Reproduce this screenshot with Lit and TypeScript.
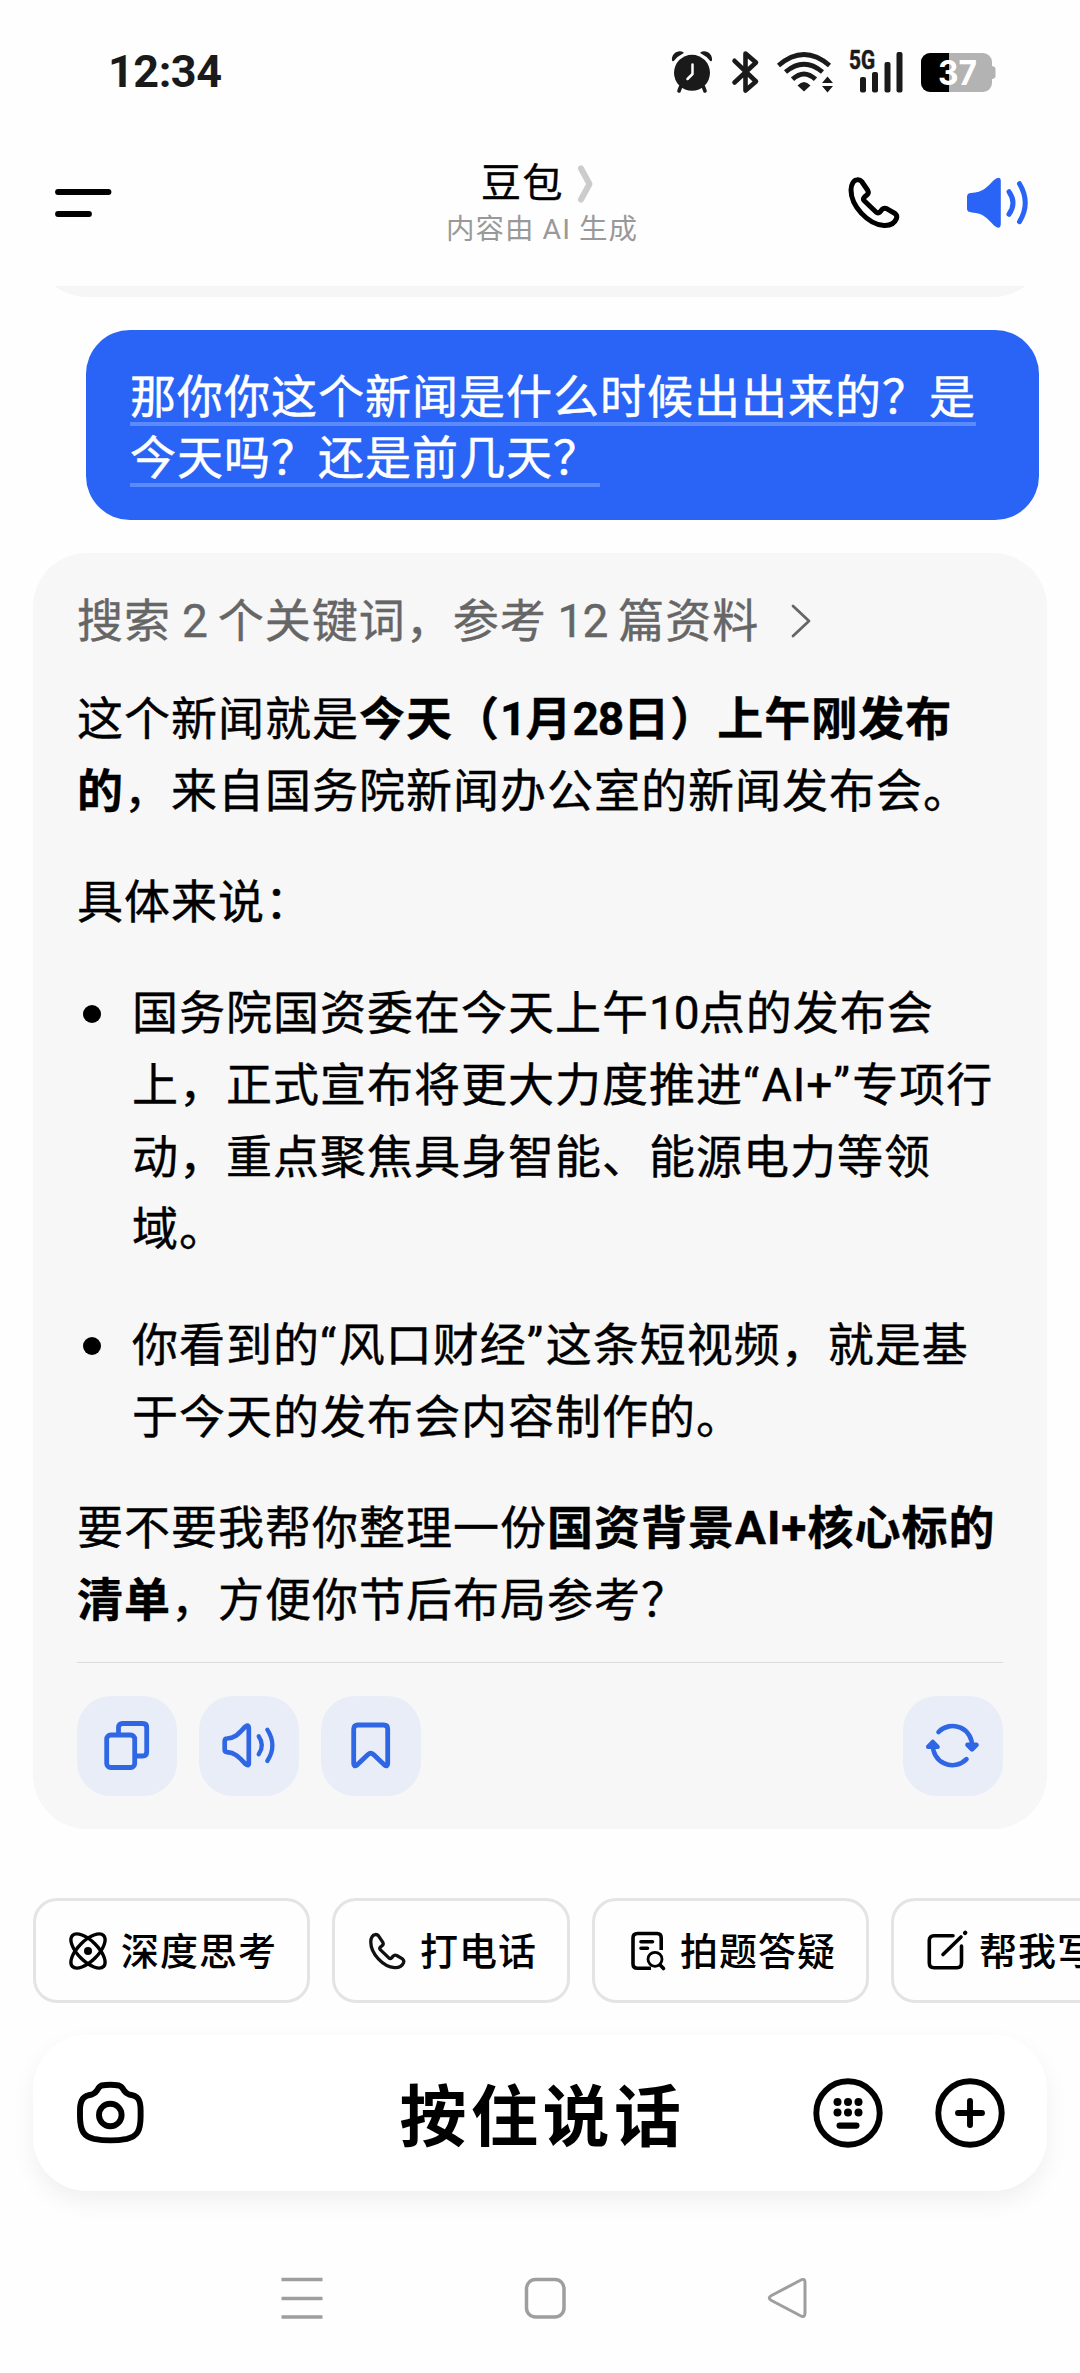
import { LitElement, html, css, svg, TemplateResult } from "lit";
import { customElement } from "lit/decorators.js";

const icon = (w: number, h: number, body: TemplateResult, box = `0 0 ${w} ${h}`) => html`
  <svg width=${w} height=${h} viewBox=${box} fill="none" stroke-linecap="round" stroke-linejoin="round">${body}</svg>
`;

const phonePath =
  "M4 14C4 8 7 4 10 3.7Q13 3.3 14.7 5.5L20.8 14.5Q22 17 20 18.8L17.5 21Q15.5 23 17.5 25L29 36Q31 38 33 36L35 33.5Q37 31.3 40 32.8L48 37.5Q50.5 39.5 49.5 42.5C47.5 47.5 43 49.8 37 49.5C21 48.5 4 30 4 14Z";

const icons = {
  alarm: icon(43, 44, svg`
    <g fill="#1a1a1a">
      <circle cx="21" cy="22.8" r="18" />
      <path d="M1 10.5C0 4 7 -1 12.5 2.2Q13 2.8 12 3.5Q6 6.500 3 10.800Q1.800 12 1 10.500Z" />
      <path d="M41 10.500C42 4 35 -1 29.500 2.200Q29 2.800 30 3.500Q36 6.500 39 10.800Q40.200 12 41 10.500Z" />
    </g>
    <path d="M9.500 37L8 41M32.500 37L34 41" stroke="#1a1a1a" stroke-width="3.600" />
    <path d="M21.500 14.500V24L16.500 29" stroke="#fff" stroke-width="2.500" />`),
  bluetooth: icon(28, 44, svg`
    <path d="M3.500 10.800L25 31.500L14.500 40.500V3.500L25 12.500L3.500 32.500" stroke="#1a1a1a" stroke-width="4.600" />`),
  wifi: icon(58, 44, svg`
    <g stroke="#1a1a1a" stroke-width="4.800" stroke-linecap="butt">
      <path d="M2.500 15.500Q28 -6.500 53.500 15.500" />
      <path d="M9.500 22Q28 6.500 46.500 22" />
      <path d="M16.500 29.300Q28 18.500 39.500 29.300" />
    </g>
    <path d="M21.500 35.500Q28 28.500 34.500 35.500L28 41.500Z M46 33L51.500 26.500L57 33Z M46 36H57L51.500 42.500Z" fill="#1a1a1a" />`),
  signal: icon(56, 44, svg`
    <text class="net" x="1" y="19" textLength="26" lengthAdjust="spacingAndGlyphs">5G</text>
    <g fill="#1a1a1a">
      <rect x="12" y="27" width="6" height="15.500" rx="2" />
      <rect x="24" y="22" width="6" height="20.500" rx="2" />
      <rect x="36.500" y="12" width="6" height="30.500" rx="2" />
      <rect x="48.500" y="2" width="6" height="40.500" rx="2" />
    </g>`),
  battery: icon(75, 44, svg`
    <clipPath id="charge"><rect x="0" y="0" width="28" height="44" /></clipPath>
    <rect x="0" y="3" width="71" height="39" rx="9" fill="#b3b3b3" />
    <path d="M71 16Q74.500 16.500 74.500 19V26Q74.500 28.500 71 29Z" fill="#b3b3b3" />
    <rect x="0" y="3" width="71" height="39" rx="9" fill="#000" clip-path="url(#charge)" />
    <text class="level" x="17" y="34.500" textLength="39" lengthAdjust="spacingAndGlyphs">37</text>`),
  menu: icon(57, 30, svg`
    <path d="M4 4H54.500M4 26H35" stroke="#000" stroke-width="5.800" />`),
  titleArrow: icon(29, 40, svg`
    <path d="M7 4.500L15.500 20L7 35.500" stroke="#ccc" stroke-width="6" />`),
  call: icon(53, 53, svg`<path d=${phonePath} stroke="#000" stroke-width="5" />`),
  speaker: icon(64, 53, svg`
    <path d="M1 21Q1 17 5 17C17 16.500 21 11 28 4Q34.500 -1 34.800 5V48Q34.500 54.500 28 49.500C21 42 17 37 6 36.500Q1 36 1 33Z" fill="#2a64f6" />
    <path d="M43 15.700Q51 27 43 38.300M53.500 7.700Q65 27 53.500 45.700" stroke="#2a64f6" stroke-width="5" />`),
  more: icon(24, 38, svg`<path d="M3 4L19 19L3 34" stroke="#666" stroke-width="2.800" />`),
  copy: icon(54, 54, svg`
    <g stroke="#2f66e4" stroke-width="4.800">
      <rect x="6.700" y="16" width="28" height="32.500" rx="4" />
      <path d="M18.500 15.500V8.500Q18.500 4.500 22.500 4.500H42.700Q46.700 4.500 46.700 8.500V33Q46.700 37 42.700 37H35.500" />
    </g>`),
  read: icon(54, 54, svg`
    <g stroke="#2f66e4" stroke-width="4.700">
      <path d="M2.700 22.500Q2.700 19.500 5 19.500C14 19 17 14 23.500 7.500Q26.800 5 26.800 9V44Q26.800 47.800 23.500 45C17 38.500 14 34 5 33.200Q2.700 33 2.700 30.500Z" />
      <path d="M36.700 17.300Q43 26.500 36.700 35.300M45.300 10.700Q55.500 26.500 45.300 42" stroke-width="4.300" />
    </g>`),
  bookmark: icon(54, 54, svg`
    <path d="M9.700 10Q9.700 6 13.700 6H39.700Q43.700 6 43.700 10V44.500Q43.700 48.500 40.500 46L29.500 35.500Q26.700 33 24 35.500L13 46Q9.700 48.500 9.700 44.500Z" stroke="#2f66e4" stroke-width="4.800" />`),
  refresh: icon(54, 54, svg`
    <g stroke="#2f66e4" stroke-width="4.600">
      <path d="M12.500 13A19.500 19.500 0 0 1 46 28" />
      <path d="M40.500 40.200A19.500 19.500 0 0 1 7 25" />
      <path d="M41.500 25.800L46 30.300L50.500 25.800Z M2.200 27.800L6.800 23L11.500 27.800Z" fill="#2a64f6" />
    </g>`),
  think: icon(44, 44, svg`
    <g stroke="#000" stroke-width="3.400">
      <ellipse cx="22" cy="22" rx="22" ry="10" transform="rotate(45 22 22)" />
      <ellipse cx="22" cy="22" rx="22" ry="10" transform="rotate(-45 22 22)" />
    </g>
    <circle cx="22" cy="22" r="4" fill="#000" />`),
  dial: icon(44, 44, svg`<path d=${phonePath} stroke="#111" stroke-width="4.600" />`, "-4 -4 61 61"),
  question: icon(44, 44, svg`
    <g stroke="#000" stroke-width="3.600">
      <path d="M26 39.300H12.500Q8 39.300 8 34.800V9Q8 4.500 12.500 4.500H32Q36.200 4.500 36.200 9V21" stroke-linecap="butt" />
      <path d="M16 12.700H27.500M16 19.300H22.500" />
      <circle cx="30" cy="30.300" r="7" stroke-width="2.800" />
      <path d="M35.200 36L38.500 39.500" />
    </g>`),
  write: icon(44, 44, svg`
    <g stroke="#000" stroke-width="3.600">
      <path d="M29 6.700H10Q5.300 6.700 5.300 11.500V34Q5.300 38.700 10 38.700H33Q37.500 38.700 37.500 34V17" />
      <path d="M37 8L19 25.500" />
      <path d="M41 4L41.300 3.700" stroke-width="4.200" />
    </g>`),
  camera: icon(69, 66, svg`
    <g stroke="#000" stroke-width="5.900">
      <path d="M25.500 5.500Q34.300 4 43 5.500Q46 6.500 48 10.500Q50 13.500 53 14.500C61.500 15.500 64.500 19 64.600 30V37C64.500 51 61 56.500 51 58.800Q34.300 62 18 58.800C8 56.500 4.200 51 4 37V30C4.100 19 8 15.500 16 14.500Q19 13.500 21 10.500Q23 6.500 25.500 5.500Z" />
      <circle cx="34.300" cy="35" r="11.300" />
    </g>`),
  keyboard: icon(70, 70, svg`
    <circle cx="35" cy="35" r="31.700" stroke="#000" stroke-width="5.900" />
    <g fill="#000">
      <circle cx="24.500" cy="24" r="4" /><circle cx="35" cy="24" r="4" /><circle cx="45.500" cy="24" r="4" />
      <circle cx="24.500" cy="34.500" r="4" /><circle cx="35" cy="34.500" r="4" /><circle cx="45.500" cy="34.500" r="4" />
      <rect x="23.500" y="44.500" width="23" height="6.200" rx="3.100" />
    </g>`),
  plus: icon(70, 70, svg`
    <g stroke="#000" stroke-width="5.900">
      <circle cx="35" cy="35" r="31.700" />
      <path d="M23 35H47M35 23V47" />
    </g>`),
  recents: icon(42, 44, svg`
    <path d="M0.500 3.500H41.500M0.500 22.500H41.500M0.500 41H41.500" stroke="#9e9e9e" stroke-width="3.700" stroke-linecap="butt" />`),
  home: icon(42, 44, svg`
    <rect x="2.500" y="3.500" width="37.500" height="37.500" rx="9" stroke="#9e9e9e" stroke-width="3.500" />`),
  back: icon(42, 44, svg`
    <path d="M33 4.500Q38 1.500 38 6.500V37Q38 42.500 33 39.500L4.500 24.500Q0 22 4.500 19.500Z" stroke="#9e9e9e" stroke-width="3" />`),
};

const chips = [
  { label: "深度思考", glyph: icons.think },
  { label: "打电话", glyph: icons.dial },
  { label: "拍题答疑", glyph: icons.question },
  { label: "帮我写作", glyph: icons.write },
];

@customElement("app-root")
export class AppRoot extends LitElement {
  static styles = css`
    :host {
      display: flex;
      flex-direction: column;
      box-sizing: border-box;
      width: 1080px;
      height: 2373px;
      overflow: hidden;
      background: #fefefe;
      color: #000;
      font-family: Roboto, "Noto Sans CJK SC", sans-serif;
    }
    svg { display: block; flex: none; overflow: visible; }
    .status {
      display: flex;
      flex: none;
      align-items: center;
      justify-content: space-between;
      height: 44px;
      padding: 50px 84px 0 108px;
    }
    .clock { font-size: 45px; line-height: 44px; font-weight: 700; color: #1a1a1a; letter-spacing: -0.5px; }
    .indicators { display: flex; gap: 17px; }
    .cell { margin-left: -3px; }
    .net { font: 700 25px Roboto, sans-serif; fill: #1a1a1a; stroke: #1a1a1a; stroke-width: 0.6px; }
    .level { font: 700 34px Inter, sans-serif; fill: #fff; }
    .header {
      display: grid;
      flex: none;
      grid-template-columns: 1fr auto 1fr;
      align-items: center;
      height: 192px;
      padding: 0 50px 0 54px;
      box-sizing: border-box;
    }
    .titles { display: flex; flex-direction: column; align-items: center; padding-top: 32px; }
    .title { display: flex; align-items: center; font-size: 40px; line-height: 48px; letter-spacing: 1.5px; -webkit-text-stroke: 0.4px; }
    .title svg { margin-left: 10px; }
    .subtitle { font-size: 28.5px; line-height: 44px; color: #999; letter-spacing: 1px; }
    .menu { padding-top: 25px; }
    .tools { display: flex; justify-content: flex-end; gap: 66px; padding-top: 24px; }
    .previous { display: flex; flex: none; align-items: flex-end; height: 11px; overflow: hidden; padding: 0 33px; }
    .tail { flex: 1; height: 120px; background: #f6f6f6; border-radius: 54px; }
    .bubble {
      flex: none;
      box-sizing: border-box;
      height: 190px;
      margin: 33px 41px 0 86px;
      padding: 37px 44px 0;
      background: #2a64f6;
      border-radius: 44px;
      color: #fff;
    }
    .asked {
      display: block;
      font-size: 46px;
      line-height: 61px;
      letter-spacing: 1px;
      white-space: nowrap;
      -webkit-text-stroke: 0.5px;
    }
    .mark {
      text-decoration: underline;
      text-decoration-color: #5b8bfa;
      text-decoration-thickness: 4px;
      text-underline-offset: 9px;
      text-decoration-skip-ink: none;
    }
    .answer {
      display: flex;
      flex: none;
      flex-direction: column;
      margin: 33px 33px 0;
      padding: 32px 44px 33px;
      background: #f7f7f7;
      border-radius: 54px;
      font-size: 46px;
      line-height: 72px;
      letter-spacing: 1px;
      white-space: nowrap;
      -webkit-text-stroke: 0.4px;
    }
    .sources { display: flex; align-items: center; gap: 31px; color: #666; word-spacing: -1.5px; }
    p, ul { margin: 0; padding: 0; }
    .line { display: block; height: 72px; }
    b { font-weight: 700; }
    .num { letter-spacing: -1px; }
    .quote { letter-spacing: 2.5px; }
    .lead { margin-top: 26px; }
    .para { margin-top: 39px; }
    .list { display: flex; flex-direction: column; gap: 44px; margin-top: 39px; list-style: none; }
    .item { display: flex; }
    .dot { flex: none; width: 18px; height: 18px; margin: 28px 31px 0 6px; border-radius: 50%; background: #000; }
    .rule { height: 1px; margin-top: 26px; background: #dcdcdc; }
    .actions { display: flex; gap: 22px; margin-top: 33px; }
    .action {
      display: flex;
      align-items: center;
      justify-content: center;
      width: 100px;
      height: 100px;
      border-radius: 34px;
      background: #e8edf7;
    }
    .action:last-child { margin-left: auto; }
    .chips { display: flex; flex: none; gap: 22px; margin-top: 69px; padding-left: 33px; overflow: hidden; }
    .chip {
      display: flex;
      flex: none;
      align-items: center;
      gap: 11px;
      box-sizing: border-box;
      height: 105px;
      padding: 0 30px;
      border: 3px solid #e4e4e4;
      border-radius: 24px;
      font-size: 38px;
      letter-spacing: 1px;
      font-weight: 500;
      white-space: nowrap;
    }
    .label { padding-bottom: 4px; }
    .compose {
      display: grid;
      flex: none;
      grid-template-columns: 1fr auto 1fr;
      align-items: center;
      height: 156px;
      margin: 32px 33px 0;
      padding: 0 42px 0 43px;
      border-radius: 54px;
      background: #fff;
      box-shadow: 0 10px 24px rgba(0, 0, 0, 0.06);
    }
    .hold { font-size: 67px; line-height: 80px; font-weight: 700; letter-spacing: 4.5px; padding: 10px 0 0 4px; }
    .extras { display: flex; justify-content: flex-end; gap: 52px; }
    .nav { display: flex; flex: none; justify-content: space-between; padding: 85px 271px 0 281px; }
  `;

  render() {
    return html`
      <div class="status">
        <span class="clock">12:34</span>
        <div class="indicators">
          ${icons.alarm}${icons.bluetooth}${icons.wifi}
          <span class="cell">${icons.signal}</span>
          ${icons.battery}
        </div>
      </div>
      <header class="header">
        <div class="menu">${icons.menu}</div>
        <div class="titles">
          <div class="title">豆包${icons.titleArrow}</div>
          <div class="subtitle">内容由 AI 生成</div>
        </div>
        <div class="tools">${icons.call}${icons.speaker}</div>
      </header>
      <div class="previous"><div class="tail"></div></div>
      <div class="bubble">
        <span class="asked"><span class="mark">那你你这个新闻是什么时候出出来的？是</span></span>
        <span class="asked"><span class="mark">今天吗？还是前几天？</span></span>
      </div>
      <section class="answer">
        <div class="sources">
          <span>搜索 <span class="num">2</span> 个关键词，参考 <span class="num">12</span> 篇资料</span>${icons.more}
        </div>
        <p class="lead">
          <span class="line">这个新闻就是<b>今天（<span class="num">1</span>月<span class="num">28</span>日）上午刚发布</b></span>
          <span class="line"><b>的</b>，来自国务院新闻办公室的新闻发布会。</span>
        </p>
        <p class="para"><span class="line">具体来说：</span></p>
        <ul class="list">
          <li class="item">
            <span class="dot"></span>
            <div>
              <span class="line">国务院国资委在今天上午<span class="num">10</span>点的发布会</span>
              <span class="line">上，正式宣布将更大力度推进<span class="quote">“</span>AI+<span class="quote">”</span>专项行</span>
              <span class="line">动，重点聚焦具身智能、能源电力等领</span>
              <span class="line">域。</span>
            </div>
          </li>
          <li class="item">
            <span class="dot"></span>
            <div>
              <span class="line">你看到的<span class="quote">“</span>风口财经<span class="quote">”</span>这条短视频，就是基</span>
              <span class="line">于今天的发布会内容制作的。</span>
            </div>
          </li>
        </ul>
        <p class="para">
          <span class="line">要不要我帮你整理一份<b>国资背景AI+核心标的</b></span>
          <span class="line"><b>清单</b>，方便你节后布局参考？</span>
        </p>
        <div class="rule"></div>
        <div class="actions">
          <div class="action">${icons.copy}</div>
          <div class="action">${icons.read}</div>
          <div class="action">${icons.bookmark}</div>
          <div class="action">${icons.refresh}</div>
        </div>
      </section>
      <div class="chips">
        ${chips.map((c) => html`<div class="chip">${c.glyph}<span class="label">${c.label}</span></div>`)}
      </div>
      <div class="compose">
        ${icons.camera}
        <span class="hold">按住说话</span>
        <div class="extras">${icons.keyboard}${icons.plus}</div>
      </div>
      <nav class="nav">${icons.recents}${icons.home}${icons.back}</nav>
    `;
  }
}
